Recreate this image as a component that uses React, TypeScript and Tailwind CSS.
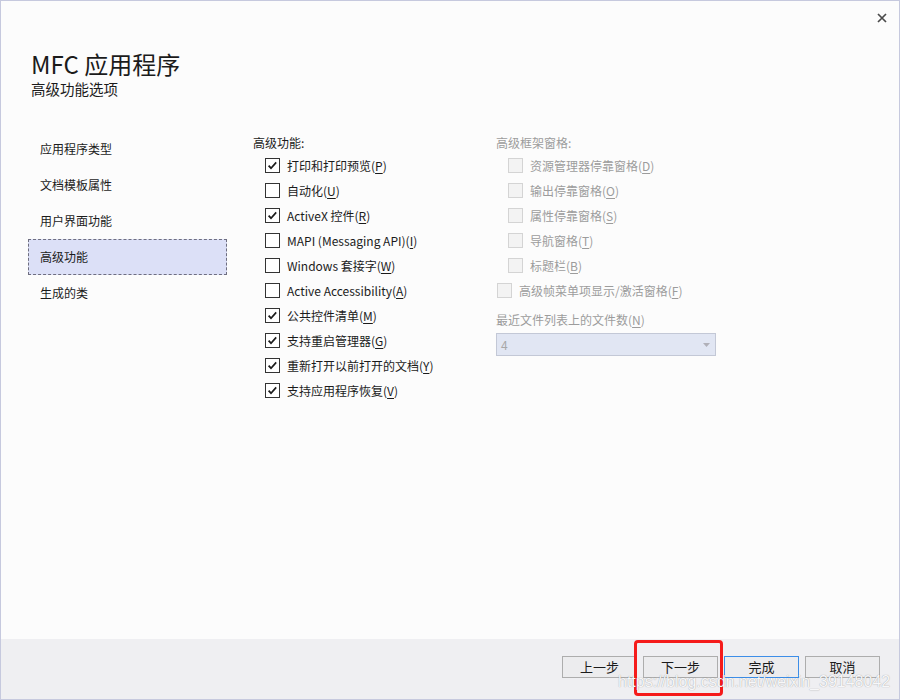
import React from "react";

const FONT = '"Microsoft YaHei UI","Noto Sans CJK SC","Noto Sans",sans-serif';

function Check({ checked, disabled }: { checked?: boolean; disabled?: boolean }) {
  return (
    <span
      className={
        "w-[15px] h-[15px] shrink-0 flex items-center justify-center border " +
        (disabled ? "border-[#d4d4d4] bg-[#f3f3f3]" : "border-[#333333] bg-white")
      }
    >
      {checked && (
        <svg width="13" height="13" viewBox="0 0 13 13">
          <path d="M2.6 6.6 L5 9.2 L10.2 3.4" fill="none" stroke="#1a1a1a" strokeWidth="1.7" />
        </svg>
      )}
    </span>
  );
}

function Row({
  label,
  k,
  checked,
  disabled,
  indent,
}: {
  label: string;
  k: string;
  checked?: boolean;
  disabled?: boolean;
  indent?: boolean;
}) {
  return (
    <div className={"h-[25px] flex items-center gap-[7px] " + (indent ? "pl-[12px]" : "pl-[1px]")}>
      <Check checked={checked} disabled={disabled} />
      <span className={"text-[12px] leading-[20px] whitespace-nowrap " + (disabled ? "text-[#9c9c9c]" : "text-[#1b1b1b]")}>
        {label}(<u className="underline-offset-2">{k}</u>)
      </span>
    </div>
  );
}

export default function App() {
  const nav = ["应用程序类型", "文档模板属性", "用户界面功能", "高级功能", "生成的类"];
  const mid: [string, string, boolean][] = [
    ["打印和打印预览", "P", true],
    ["自动化", "U", false],
    ["ActiveX 控件", "R", true],
    ["MAPI (Messaging API)", "I", false],
    ["Windows 套接字", "W", false],
    ["Active Accessibility", "A", false],
    ["公共控件清单", "M", true],
    ["支持重启管理器", "G", true],
    ["重新打开以前打开的文档", "Y", true],
    ["支持应用程序恢复", "V", true],
  ];
  const right: [string, string][] = [
    ["资源管理器停靠窗格", "D"],
    ["输出停靠窗格", "O"],
    ["属性停靠窗格", "S"],
    ["导航窗格", "T"],
    ["标题栏", "B"],
  ];
  return (
    <div
      className="w-[900px] h-[700px] bg-[#fcfcfc] border border-[#c6c9de] flex flex-col relative overflow-hidden"
      style={{ fontFamily: FONT }}
    >
      <div className="flex-1 flex flex-col">
        <div className="flex justify-between pl-[30px] pr-[11px]">
          <div className="pt-[48px] text-[#1b1b1b]">
            <div className="text-[24px] leading-[30px]">MFC 应用程序</div>
            <div className="text-[14.5px] leading-[20px]">高级功能选项</div>
          </div>
          <button className="mt-[11px] w-[12px] h-[12px] flex items-center justify-center">
            <svg width="10" height="10" viewBox="0 0 10 10">
              <path d="M1 1 L9 9 M9 1 L1 9" stroke="#4a4a4a" strokeWidth="1.7" />
            </svg>
          </button>
        </div>

        <div className="flex pl-[27px] mt-[30px]">
          <div className="w-[199px] pt-[2px] flex flex-col">
            {nav.map((n) => (
              <div
                key={n}
                className={
                  "h-[36px] flex items-center pl-[11px] text-[12px] text-[#1b1b1b] " +
                  (n === "高级功能" ? "bg-[#dce0f7] border border-dashed border-[#6e6e80]" : "border border-transparent")
                }
              >
                {n}
              </div>
            ))}
          </div>

          <div className="w-[243px] ml-[26px] pt-[4px] flex flex-col">
            <div className="h-[20px] flex items-center text-[12px] text-[#1b1b1b]">高级功能:</div>
            {mid.map(([l, k, c]) => (
              <Row key={l} label={l} k={k} checked={c} indent />
            ))}
          </div>

          <div className="w-[230px] pt-[4px] flex flex-col">
            <div className="h-[20px] flex items-center text-[12px] text-[#9c9c9c]">高级框架窗格:</div>
            {right.map(([l, k]) => (
              <Row key={l} label={l} k={k} disabled indent />
            ))}
            <Row label="高级帧菜单项显示/激活窗格" k="F" disabled />
            <div className="mt-[7px] h-[20px] flex items-center text-[12px] text-[#9c9c9c]">
              最近文件列表上的文件数(<u className="underline-offset-2">N</u>)
            </div>
            <div className="mt-[3px] w-[220px] h-[23px] bg-[#e1e6f3] border border-[#c3c8d6] flex items-center justify-between pl-[4px] pr-[5px]">
              <span className="text-[12px] text-[#a8a8a8]">4</span>
              <svg width="7" height="4" viewBox="0 0 7 4">
                <path d="M0 0 L7 0 L3.5 4 Z" fill="#b0b0b8" />
              </svg>
            </div>
          </div>
        </div>
      </div>

      <div className="h-[60px] bg-[#efeff2] flex justify-end items-start pt-[17px] pr-[19px] gap-[6px]">
        {["上一步", "下一步", "完成", "取消"].map((b) => (
          <button
            key={b}
            className={
              "w-[75px] h-[22px] text-[13px] text-[#1b1b1b] bg-[#ececee] border flex items-center justify-center " +
              (b === "完成" ? "border-[#3d8ee8]" : "border-[#adadad]")
            }
          >
            {b}
          </button>
        ))}
      </div>

      <div className="absolute left-[633px] top-[639px] w-[89px] h-[56px] border-[3px] border-[#f51b1b] rounded-[4px]" />
      <div
        className="absolute left-[617px] top-[670px] text-[16px] leading-[22px] text-[#f7f7f9] [text-shadow:0_0_1px_rgba(0,0,0,0.4)] whitespace-nowrap"
        style={{ fontFamily: '"Liberation Sans",Arial,sans-serif' }}
      >
        https://blog.csdn.net/weixin_39148042
      </div>
    </div>
  );
}
